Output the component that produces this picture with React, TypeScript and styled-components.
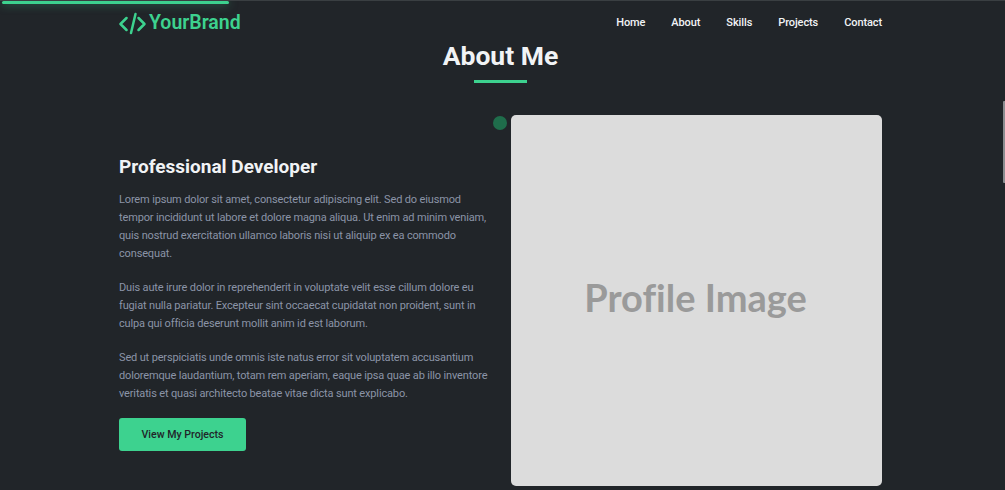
import styled, { createGlobalStyle } from "styled-components";

const GlobalStyle = createGlobalStyle`
  html, body {
    margin: 0;
    height: 100%;
    overflow: hidden;
    background: #212529;
  }
  * {
    box-sizing: border-box;
  }
`;

const Page = styled.div`
  position: relative;
  width: 1005px;
  height: 490px;
  padding-right: 4px;
  overflow: hidden;
  background: #212529;
  border-top: 1px solid #3a3f42;
  font-family: "Roboto", "Noto Sans", sans-serif;
`;

const ProgressBar = styled.div`
  position: absolute;
  top: 0;
  left: 2px;
  width: 227px;
  height: 3px;
  border-radius: 2px;
  background: #3dd28f;
  box-shadow: 0 0 10px rgba(61, 210, 143, 0.6);
`;

const ScrollThumb = styled.div`
  position: absolute;
  top: 100px;
  right: 0;
  width: 2px;
  height: 82px;
  border-radius: 1px 0 0 1px;
  background: #8a8d90;
`;

const Container = styled.div`
  width: 763px;
  margin: 0 auto;
`;

const Navbar = styled.nav`
  display: flex;
  align-items: center;
  justify-content: space-between;
  height: 41px;
  padding-top: 2px;
`;

const Brand = styled.a`
  display: flex;
  align-items: center;
  gap: 2px;
  font-size: 19.5px;
  font-weight: 600;
  color: #3dd28f;
`;

const NavLinks = styled.div`
  display: flex;
  gap: 26px;
`;

const NavLink = styled.a`
  font-size: 11px;
  font-weight: 500;
  letter-spacing: -0.1px;
  color: #f1f3f5;
`;

const SectionTitle = styled.h1`
  margin: 0;
  text-align: center;
  font-size: 26.5px;
  line-height: 28px;
  font-weight: 700;
  color: #f1f3f5;
`;

const TitleRule = styled.div`
  width: 53px;
  height: 3px;
  margin: 10px auto 0;
  background: #3dd28f;
`;

const Columns = styled.div`
  display: grid;
  grid-template-columns: 371px 371px;
  gap: 21px;
  margin-top: 32px;
`;

const TextColumn = styled.div`
  display: flex;
  flex-direction: column;
  justify-content: center;
  padding-top: 4px;
`;

const Heading = styled.h2`
  margin: 0 0 11px;
  font-size: 19px;
  line-height: 26px;
  font-weight: 700;
  color: #f1f3f5;
`;

const Paragraph = styled.p`
  margin: 0 0 16px;
  font-size: 11px;
  line-height: 18px;
  letter-spacing: -0.15px;
  color: #8b94a7;

  &:last-of-type {
    margin-bottom: 15px;
  }
`;

const Button = styled.a`
  display: flex;
  align-items: center;
  justify-content: center;
  width: 127px;
  height: 33px;
  border-radius: 3px;
  background: #3dd28f;
  font-size: 10.6px;
  font-weight: 500;
  color: #212529;
`;

const ImageWrap = styled.div`
  position: relative;
`;

const Dot = styled.span`
  position: absolute;
  top: 1px;
  left: -18px;
  width: 14px;
  height: 14px;
  border-radius: 50%;
  background: #1f6d4b;
`;

const ProfileImage = styled.div`
  display: flex;
  align-items: center;
  justify-content: center;
  height: 371px;
  padding: 0 2px 8px 0;
  border-radius: 5px;
  background: #dcdcdc;
  font-family: "Lato", sans-serif;
  font-variant-ligatures: none;
  font-size: 38px;
  font-weight: 700;
  color: #9a9a9a;
`;

const navItems = ["Home", "About", "Skills", "Projects", "Contact"];

export default function App() {
  return (
    <Page>
      <GlobalStyle />
      <ProgressBar />
      <ScrollThumb />
      <Container>
        <Navbar>
          <Brand>
            <svg width="28" height="24" viewBox="0 0 28 24" fill="none" stroke="#3dd28f" strokeWidth="2.5" strokeLinecap="round" strokeLinejoin="round">
              <path d="M7.5 7 L1.5 13 L7.5 19" />
              <path d="M16.5 3 L12 22" />
              <path d="M19.5 7 L25.5 13 L19.5 19" />
            </svg>
            YourBrand
          </Brand>
          <NavLinks>
            {navItems.map((item) => (
              <NavLink key={item}>{item}</NavLink>
            ))}
          </NavLinks>
        </Navbar>
        <SectionTitle>About Me</SectionTitle>
        <TitleRule />
        <Columns>
          <TextColumn>
            <Heading>Professional Developer</Heading>
            <Paragraph>
              Lorem ipsum dolor sit amet, consectetur adipiscing elit. Sed do eiusmod tempor incididunt ut labore et dolore magna aliqua. Ut enim ad minim veniam, quis nostrud exercitation ullamco laboris nisi ut aliquip ex ea commodo consequat.
            </Paragraph>
            <Paragraph>
              Duis aute irure dolor in reprehenderit in voluptate velit esse cillum dolore eu fugiat nulla pariatur. Excepteur sint occaecat cupidatat non proident, sunt in culpa qui officia deserunt mollit anim id est laborum.
            </Paragraph>
            <Paragraph>
              Sed ut perspiciatis unde omnis iste natus error sit voluptatem accusantium doloremque laudantium, totam rem aperiam, eaque ipsa quae ab illo inventore veritatis et quasi architecto beatae vitae dicta sunt explicabo.
            </Paragraph>
            <Button>View My Projects</Button>
          </TextColumn>
          <ImageWrap>
            <Dot />
            <ProfileImage>Profile Image</ProfileImage>
          </ImageWrap>
        </Columns>
      </Container>
    </Page>
  );
}
